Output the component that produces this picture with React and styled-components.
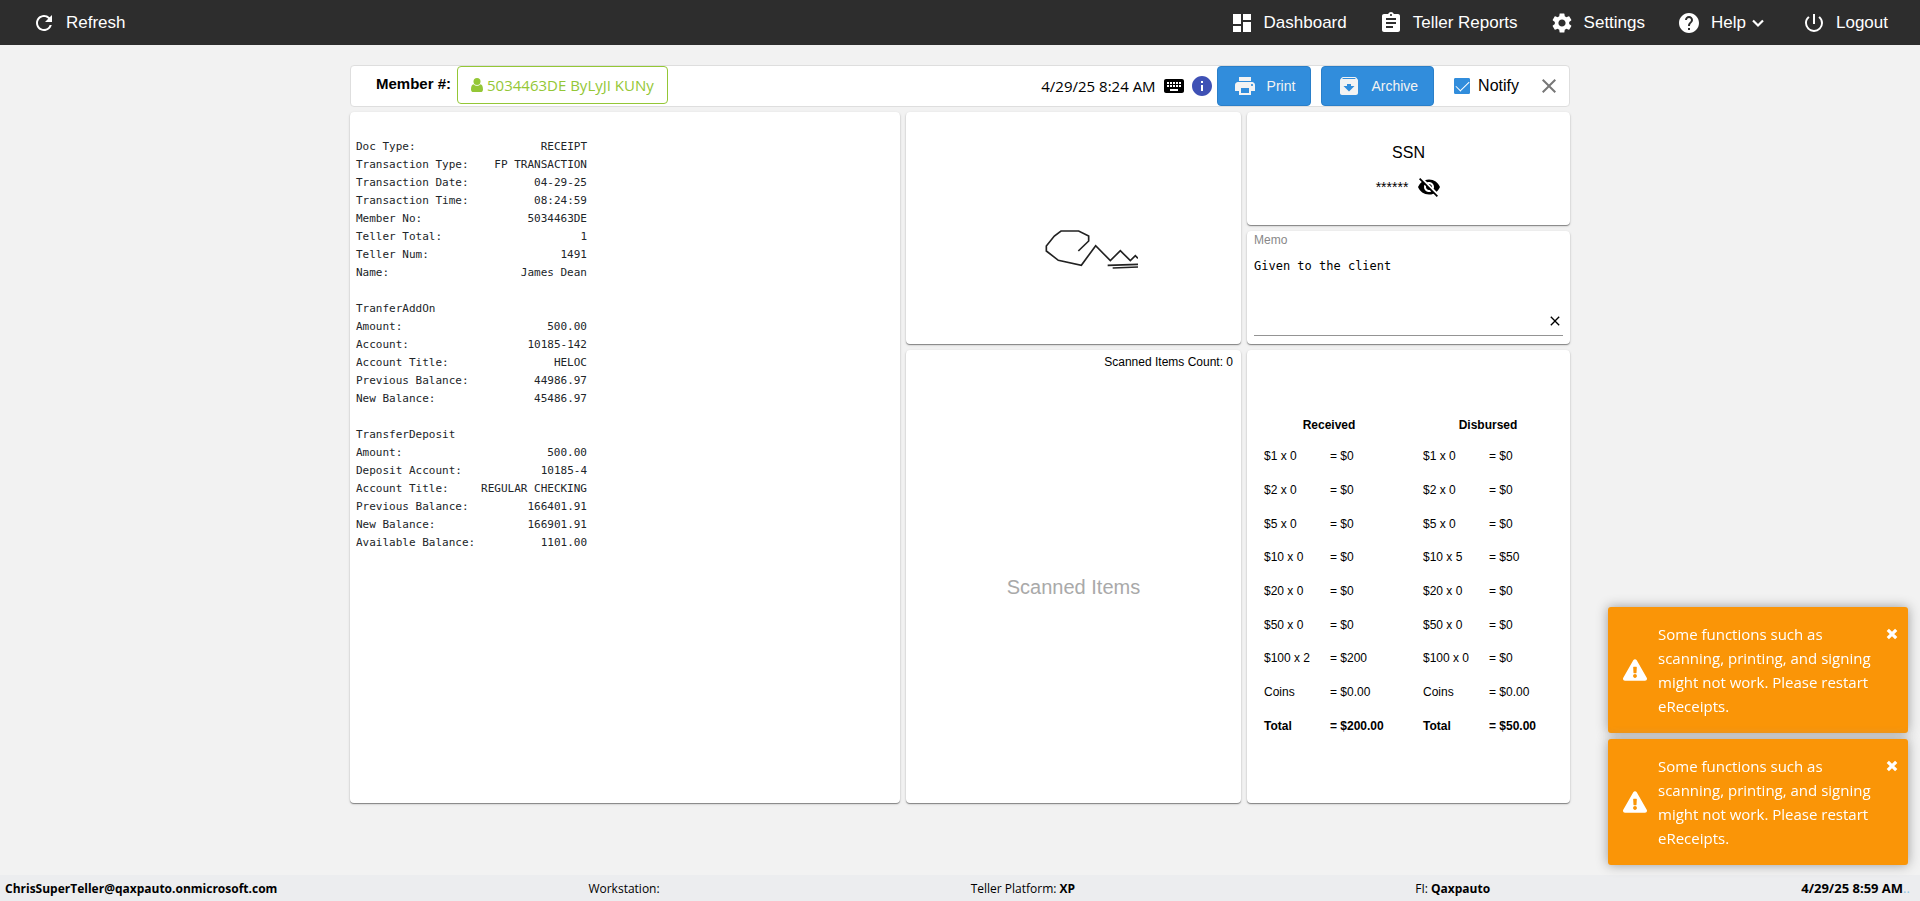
import React, { useState } from "react";
import styled, { createGlobalStyle } from "styled-components";
import {
  MdRefresh, MdDashboard, MdAssignment, MdSettings, MdHelp, MdPowerSettingsNew,
  MdPrint, MdArchive, MdKeyboard, MdInfo, MdVisibilityOff, MdClose,
} from "react-icons/md";
import { FaExclamationTriangle } from "react-icons/fa";

const arial = `"Liberation Sans", Arial, sans-serif`;
const humanist = `"Open Sans", "Noto Sans", sans-serif`;
const mono = `"DejaVu Sans Mono", monospace`;

const GlobalStyle = createGlobalStyle`
  * { box-sizing: border-box; }
  body { margin: 0; background: #f2f2f2; color: #000; font-family: ${arial}; font-size: 16px; }
  button { font: inherit; color: inherit; background: none; border: 0; padding: 0; cursor: pointer; }
  svg { display: block; flex: none; }
`;

const Page = styled.div`
  min-height: 100vh;
  display: flex;
  flex-direction: column;
`;

const TopBar = styled.header`
  height: 45px;
  padding: 0 32px;
  background: #2d2d2d;
  color: #fff;
  display: flex;
  align-items: center;
  justify-content: space-between;
`;

const Nav = styled.nav`
  display: flex;
  gap: 32px;
`;

const NavButton = styled.button`
  display: flex;
  align-items: center;
  gap: 10px;
  font-size: 17px;
  line-height: 24px;
`;

const NavLabel = styled.span`
  display: flex;
  align-items: center;
  gap: 5px;
  padding-right: ${(p) => (p.$menu ? 5 : 0)}px;
`;

const Main = styled.main`
  flex: 1;
  width: 100%;
  max-width: 1220px;
  margin: 0 auto;
  padding: 20px 0 30px;
`;

const MemberBar = styled.section`
  height: 42px;
  margin-bottom: 5px;
  padding-left: 25px;
  padding-right: 8px;
  display: flex;
  align-items: flex-start;
  justify-content: space-between;
  background: #fff;
  border: 1px solid #dedede;
  border-radius: 4px;
`;

const MemberGroup = styled.div`
  display: flex;
  gap: 6px;
`;

const MemberLabel = styled.span`
  font-size: 15px;
  font-weight: bold;
  line-height: 36px;
`;

const MemberButton = styled.button`
  height: 38px;
  padding: 0 13px;
  display: flex;
  align-items: center;
  gap: 4px;
  border: 1px solid #94c736;
  border-radius: 4px;
  color: #94c736;
  font-family: ${humanist};
  font-size: 15px;
`;

const ActionGroup = styled.div`
  height: 40px;
  display: flex;
  align-items: center;
`;

const Stamp = styled.time`
  margin-right: 6px;
  font-family: ${humanist};
  font-size: 15px;
`;

const BarIcons = styled.div`
  margin-right: 3px;
  display: flex;
  gap: 4px;
`;

const IconButton = styled.button`
  display: flex;
  color: ${(p) => p.$color || "#000"};
`;

const ActionButton = styled.button`
  height: 40px;
  margin-right: ${(p) => p.$after}px;
  padding: 0 15px;
  display: flex;
  align-items: center;
  gap: 10px;
  background: #318ddc;
  border: 1px solid #2a7fc9;
  border-radius: 4px;
  color: #f3f3f3;
  font-size: 14px;
`;

const Check = styled.label`
  margin-right: 18px;
  display: flex;
  align-items: center;
  gap: 8px;
`;

const CheckInput = styled.input`
  appearance: none;
  width: 16px;
  height: 16px;
  margin: 0;
  display: grid;
  place-items: center;
  border: 1px solid #318ddc;
  border-radius: 1px;
  &:checked { background: #318ddc; }
  &:checked::before {
    content: "";
    width: 12px;
    height: 6px;
    margin-bottom: 4px;
    border: solid #fff;
    border-width: 0 0 1px 1px;
    rotate: -45deg;
  }
`;

const Columns = styled.div`
  display: grid;
  grid-template-columns: 550fr 335fr 323fr;
  gap: 6px;
`;

const Column = styled.div`
  display: flex;
  flex-direction: column;
  gap: 6px;
`;

const Card = styled.section`
  min-height: ${(p) => p.$min}px;
  display: flex;
  flex-direction: column;
  background: #fff;
  border-radius: 4px;
  box-shadow: 0 1px 1px rgba(0, 0, 0, 0.4), 0 1px 3px rgba(0, 0, 0, 0.14);
`;

const ReceiptCard = styled(Card)`
  padding: 26px 6px;
`;

const ReceiptTable = styled.table`
  width: 231px;
  border-collapse: collapse;
  font-family: ${mono};
  font-size: 11px;
  line-height: 18px;
  color: #212529;
  white-space: nowrap;
  td, th { height: 18px; padding: 0; font-weight: normal; text-align: left; }
  td { text-align: right; }
`;

const Centered = styled.div`
  flex: 1;
  display: flex;
  align-items: center;
  justify-content: center;
  gap: ${(p) => p.$gap || 0}px;
`;

const CountLine = styled.div`
  padding: 3px 8px 0;
  font-size: 12px;
  line-height: 18px;
  text-align: right;
`;

const Placeholder = styled(Centered)`
  color: #a9a9a9;
  font-size: 20px;
`;

const SsnCard = styled(Card)`
  padding-top: 29px;
  align-items: center;
  gap: 10px;
`;

const SsnTitle = styled.h2`
  margin: 0;
  font-size: 16px;
  font-weight: normal;
  line-height: 24px;
`;

const SsnRow = styled.div`
  display: flex;
  align-items: center;
  gap: 9px;
  font-size: 14px;
  line-height: 24px;
`;

const MemoCard = styled(Card)`
  padding: 0 7px 8px;
`;

const MemoLabel = styled.label`
  color: #888;
  font-size: 12px;
  line-height: 18px;
`;

const MemoBox = styled.div`
  flex: 1;
  display: flex;
  align-items: flex-end;
  border-bottom: 1px solid #949494;
`;

const MemoInput = styled.textarea`
  flex: 1;
  align-self: stretch;
  min-width: 0;
  padding: 8px 0 0;
  border: 0;
  outline: 0;
  resize: none;
  background: none;
  font-family: ${mono};
  font-size: 12px;
  line-height: 18px;
`;

const MemoClear = styled.button`
  height: 28px;
  display: flex;
  align-items: center;
`;

const CashTable = styled.table`
  width: 130px;
  border-collapse: collapse;
  table-layout: fixed;
  font-size: 12px;
  th, td { padding: 0; text-align: left; font-weight: inherit; }
  thead th { height: 28px; text-align: center; font-weight: bold; }
`;

const CashRow = styled.tr`
  height: ${(p) => (p.$tall ? 34 : 33)}px;
  font-weight: ${(p) => (p.$bold ? "bold" : "normal")};
`;

const Footer = styled.footer`
  height: 26px;
  padding: 0 10px 0 5px;
  display: flex;
  align-items: center;
  justify-content: space-between;
  background: #ecedef;
  font-family: ${humanist};
  font-size: 12px;
`;

const PlatformCell = styled.span`
  padding-right: 29px;
`;

const Clock = styled.span`
  font-size: 13px;
`;

const Dots = styled.span`
  color: #8fc4e0;
`;

const Toasts = styled.aside`
  position: fixed;
  right: 12px;
  bottom: 36px;
  width: 300px;
  display: flex;
  flex-direction: column;
  gap: 6px;
`;

const Toast = styled.div`
  min-height: 126px;
  padding: 15px 10px 15px 15px;
  display: flex;
  align-items: center;
  gap: 11px;
  background: #fa9507;
  border-radius: 3px;
  box-shadow: 0 0 12px #999;
  color: #fff;
  font-family: ${humanist};
  font-size: 15px;
  line-height: 24px;
`;

const ToastText = styled.p`
  flex: 1;
  margin: 0;
  white-space: nowrap;
`;

const ToastClose = styled.button`
  height: 24px;
  align-self: flex-start;
  display: flex;
  align-items: center;
`;

const receipt = [
  ["Doc Type:", "RECEIPT"],
  ["Transaction Type:", "FP TRANSACTION"],
  ["Transaction Date:", "04-29-25"],
  ["Transaction Time:", "08:24:59"],
  ["Member No:", "5034463DE"],
  ["Teller Total:", "1"],
  ["Teller Num:", "1491"],
  ["Name:", "James Dean"],
  ["", ""],
  ["TranferAddOn", ""],
  ["Amount:", "500.00"],
  ["Account:", "10185-142"],
  ["Account Title:", "HELOC"],
  ["Previous Balance:", "44986.97"],
  ["New Balance:", "45486.97"],
  ["", ""],
  ["TransferDeposit", ""],
  ["Amount:", "500.00"],
  ["Deposit Account:", "10185-4"],
  ["Account Title:", "REGULAR CHECKING"],
  ["Previous Balance:", "166401.91"],
  ["New Balance:", "166901.91"],
  ["Available Balance:", "1101.00"],
];

const received = [
  ["$1 x 0", "$0"], ["$2 x 0", "$0"], ["$5 x 0", "$0"], ["$10 x 0", "$0"], ["$20 x 0", "$0"],
  ["$50 x 0", "$0"], ["$100 x 2", "$200"], ["Coins", "$0.00"], ["Total", "$200.00"],
];
const disbursed = [
  ["$1 x 0", "$0"], ["$2 x 0", "$0"], ["$5 x 0", "$0"], ["$10 x 5", "$50"], ["$20 x 0", "$0"],
  ["$50 x 0", "$0"], ["$100 x 0", "$0"], ["Coins", "$0.00"], ["Total", "$50.00"],
];

const toastLines = [
  "Some functions such as",
  "scanning, printing, and signing",
  "might not work. Please restart",
  "eReceipts.",
];

function UserIcon() {
  return (
    <svg width="12" height="14" viewBox="0 0 12 14" fill="currentColor" aria-hidden="true">
      <circle cx="6" cy="3.500" r="3.500" />
      <path d="M2.600 6.200C0.900 6.400 0 8.600 0 11.400C0 13 1 14 2.400 14H9.600C11 14 12 13 12 11.400C12 8.600 11.100 6.400 9.400 6.200C8.500 7.200 7.300 7.700 6 7.700S3.500 7.200 2.600 6.200Z" />
    </svg>
  );
}

function ChevronIcon() {
  return (
    <svg width="14" height="10" viewBox="0 0 14 10" fill="none" stroke="currentColor" strokeWidth="2.200" aria-hidden="true">
      <path d="M2 2.500L7 7.500L12 2.500" />
    </svg>
  );
}

function ThickCross() {
  return (
    <svg width="12" height="12" viewBox="0 0 12 12" fill="none" stroke="currentColor" strokeWidth="3.200" aria-hidden="true">
      <path d="M1.800 1.800L10.200 10.200M10.200 1.800L1.800 10.200" />
    </svg>
  );
}

function Signature() {
  return (
    <svg width="129" height="116" viewBox="-36 -120 387 348" fill="none" stroke="#222" strokeWidth="5" role="img" aria-label="Signature">
      <path d="M172 123L203 93V78L173 63H120L100 78L76 108V123L112 151L181 166L224 107L268 152L298 122L328 152L343 137L351 145" />
      <path d="M260 166L351 163M275 174L351 171" />
    </svg>
  );
}

function CashSection({ title, rows }) {
  return (
    <CashTable>
      <colgroup><col width="66" /><col /></colgroup>
      <thead><tr><th colSpan={2}>{title}</th></tr></thead>
      <tbody>
        {rows.map(([label, value], i) => (
          <CashRow key={label} $bold={label === "Total"} $tall={i % 3 !== 2}>
            <th scope="row">{label}</th>
            <td>= {value}</td>
          </CashRow>
        ))}
      </tbody>
    </CashTable>
  );
}

function NavItem({ icon: Icon, label, menu }) {
  return (
    <NavButton type="button">
      <Icon size={24} />
      <NavLabel $menu={menu}>{label}{menu && <ChevronIcon />}</NavLabel>
    </NavButton>
  );
}

export default function App() {
  const [notify, setNotify] = useState(true);
  const [memo, setMemo] = useState("Given to the client");
  const [toasts, setToasts] = useState([1, 2]);

  return (
    <Page>
      <GlobalStyle />
      <TopBar>
        <NavItem icon={MdRefresh} label="Refresh" />
        <Nav>
          <NavItem icon={MdDashboard} label="Dashboard" />
          <NavItem icon={MdAssignment} label="Teller Reports" />
          <NavItem icon={MdSettings} label="Settings" />
          <NavItem icon={MdHelp} label="Help" menu />
          <NavItem icon={MdPowerSettingsNew} label="Logout" />
        </Nav>
      </TopBar>

      <Main>
        <MemberBar>
          <MemberGroup>
            <MemberLabel>Member #:</MemberLabel>
            <MemberButton type="button"><UserIcon />5034463DE ByLyJI KUNy</MemberButton>
          </MemberGroup>
          <ActionGroup>
            <Stamp>4/29/25 8:24 AM</Stamp>
            <BarIcons>
              <IconButton type="button" aria-label="Keyboard"><MdKeyboard size={24} /></IconButton>
              <IconButton type="button" aria-label="Information" $color="#3f51b5"><MdInfo size={24} /></IconButton>
            </BarIcons>
            <ActionButton type="button" $after={10}><MdPrint size={24} />Print</ActionButton>
            <ActionButton type="button" $after={20}><MdArchive size={24} />Archive</ActionButton>
            <Check>
              <CheckInput type="checkbox" checked={notify} onChange={(e) => setNotify(e.target.checked)} />
              Notify
            </Check>
            <IconButton type="button" aria-label="Close" $color="#777"><MdClose size={24} /></IconButton>
          </ActionGroup>
        </MemberBar>

        <Columns>
          <ReceiptCard>
            <ReceiptTable>
              <tbody>
                {receipt.map(([label, value], i) => (
                  <tr key={i}>
                    <th scope="row">{label}</th>
                    <td>{value}</td>
                  </tr>
                ))}
              </tbody>
            </ReceiptTable>
          </ReceiptCard>

          <Column>
            <Card $min={232}><Centered><Signature /></Centered></Card>
            <Card $min={453}>
              <CountLine>Scanned Items Count: 0</CountLine>
              <Placeholder>Scanned Items</Placeholder>
            </Card>
          </Column>

          <Column>
            <SsnCard $min={113}>
              <SsnTitle>SSN</SsnTitle>
              <SsnRow>
                ******
                <IconButton type="button" aria-label="Show SSN"><MdVisibilityOff size={24} /></IconButton>
              </SsnRow>
            </SsnCard>
            <MemoCard $min={113}>
              <MemoLabel htmlFor="memo">Memo</MemoLabel>
              <MemoBox>
                <MemoInput id="memo" rows={2} value={memo} onChange={(e) => setMemo(e.target.value)} />
                <MemoClear type="button" aria-label="Clear memo" onClick={() => setMemo("")}>
                  <MdClose size={16} />
                </MemoClear>
              </MemoBox>
            </MemoCard>
            <Card $min={453}>
              <Centered $gap={29}>
                <CashSection title="Received" rows={received} />
                <CashSection title="Disbursed" rows={disbursed} />
              </Centered>
            </Card>
          </Column>
        </Columns>
      </Main>

      <Footer>
        <b>ChrisSuperTeller@qaxpauto.onmicrosoft.com</b>
        <span>Workstation:</span>
        <PlatformCell>Teller Platform: <b>XP</b></PlatformCell>
        <span>FI: <b>Qaxpauto</b></span>
        <Clock><b>4/29/25 8:59 AM</b><Dots>..</Dots></Clock>
      </Footer>

      <Toasts>
        {toasts.map((id) => (
          <Toast key={id} role="alert">
            <FaExclamationTriangle size={24} />
            <ToastText>
              {toastLines.map((line) => <React.Fragment key={line}>{line}<br /></React.Fragment>)}
            </ToastText>
            <ToastClose type="button" aria-label="Dismiss" onClick={() => setToasts(toasts.filter((t) => t !== id))}>
              <ThickCross />
            </ToastClose>
          </Toast>
        ))}
      </Toasts>
    </Page>
  );
}
